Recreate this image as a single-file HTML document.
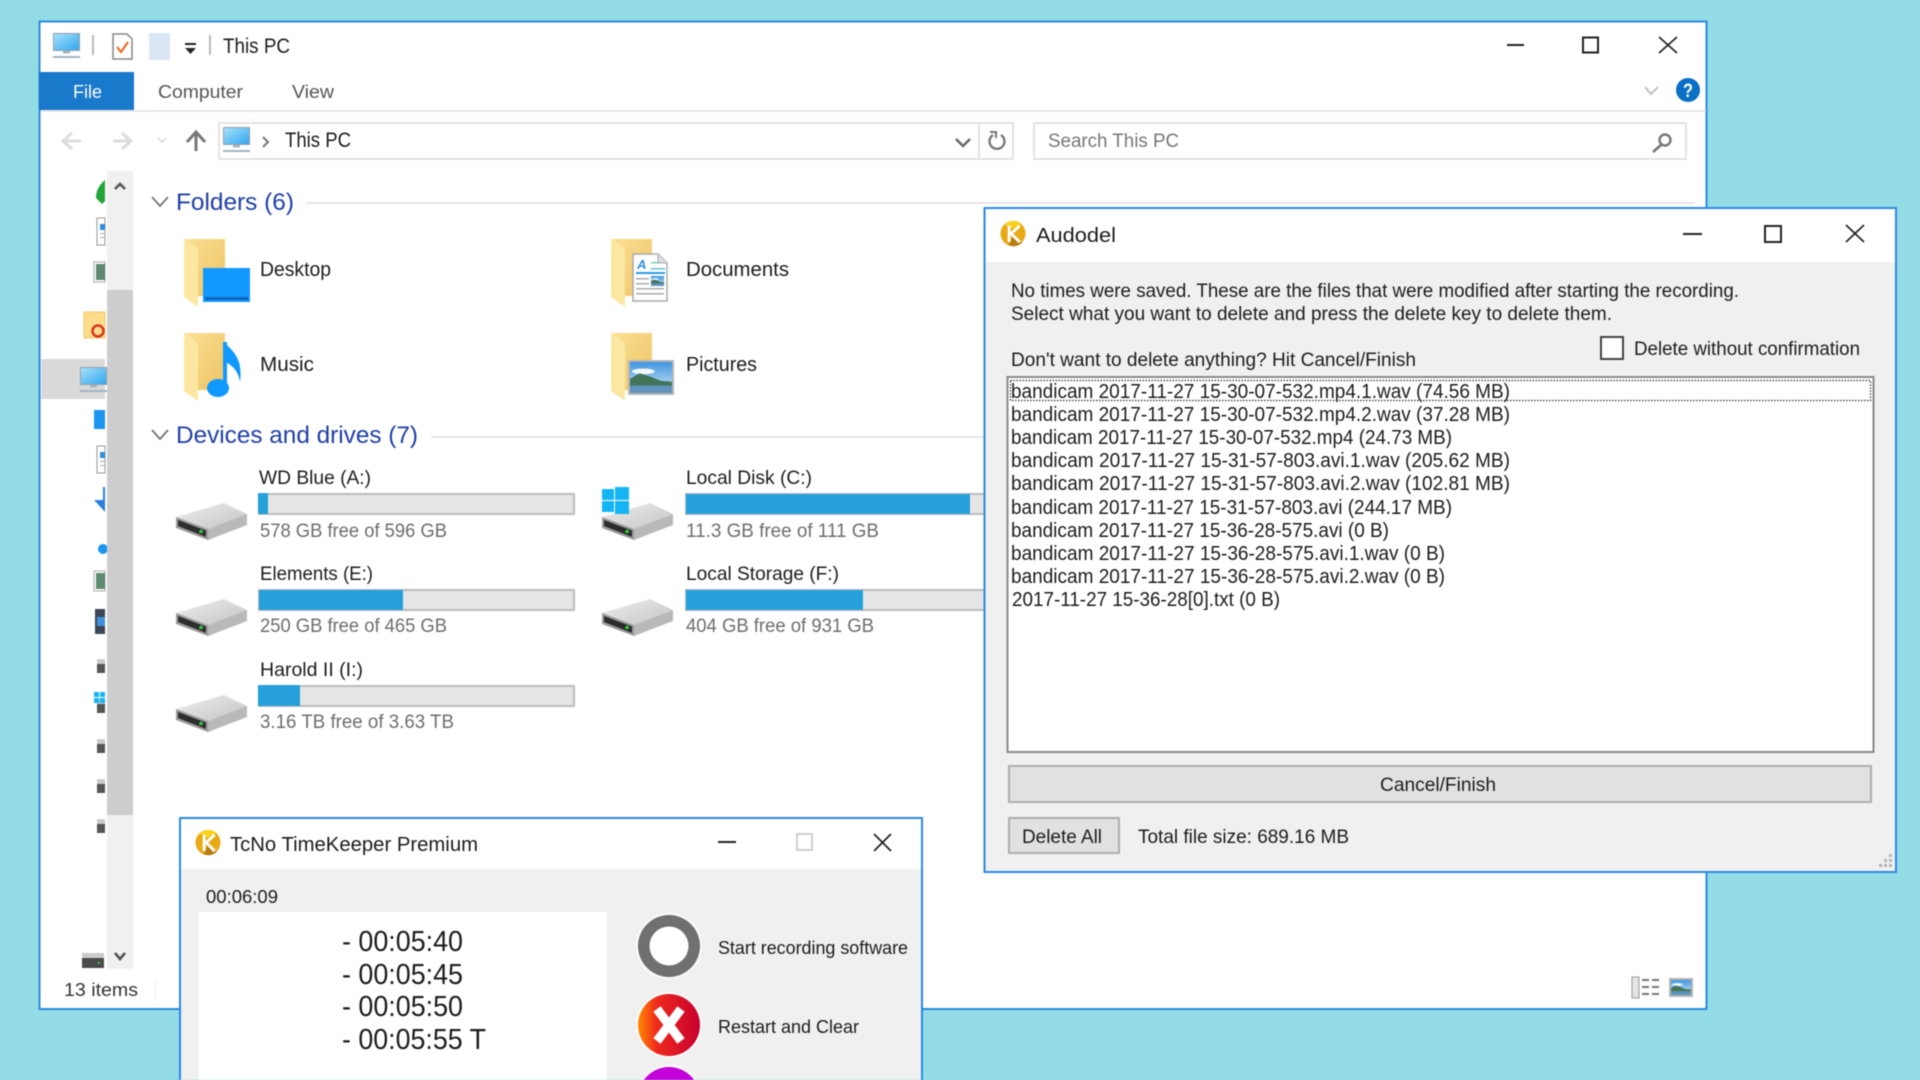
<!DOCTYPE html>
<html><head><meta charset="utf-8"><title>This PC</title>
<style>
html,body{margin:0;padding:0;width:1920px;height:1080px;overflow:hidden;background:#93dce6}
svg{display:block;filter:blur(.45px)}
text{font-family:"Liberation Sans",sans-serif;fill:#1c1c1c}
</style></head><body>
<svg xmlns="http://www.w3.org/2000/svg" width="1920" height="1080" viewBox="0 0 1920 1080" font-size="20">
<defs>
<linearGradient id="scr" x1="0" y1="0" x2="1" y2="1"><stop offset="0" stop-color="#a9e2fb"/><stop offset="1" stop-color="#2ea6ee"/></linearGradient>
<linearGradient id="fb" x1="0" y1="0" x2="1" y2="1"><stop offset="0" stop-color="#fbe093"/><stop offset="1" stop-color="#edc466"/></linearGradient>
<linearGradient id="dt" x1="0" y1="0" x2="1" y2="1"><stop offset="0" stop-color="#eeeeee"/><stop offset="1" stop-color="#c4c4c4"/></linearGradient>
<linearGradient id="red" x1="0" y1="0" x2="1" y2="0"><stop offset="0" stop-color="#ff8a00"/><stop offset=".3" stop-color="#ee2a1c"/><stop offset="1" stop-color="#c80030"/></linearGradient>
<linearGradient id="skyg" x1="0" y1="0" x2="0" y2="1"><stop offset="0" stop-color="#3f96e2"/><stop offset="1" stop-color="#d8ebf2"/></linearGradient>
<symbol id="pic" viewBox="0 0 44 33" preserveAspectRatio="none">
<rect width="44" height="33" fill="url(#skyg)"/>
<ellipse cx="14" cy="10" rx="12" ry="3" fill="#f2f8fb"/>
<polygon points="0,18 10,12 20,15 32,20 44,21 44,25 0,25" fill="#42745a"/>
<rect y="25" width="44" height="8" fill="#5f93bc"/>
</symbol>
<symbol id="mon" viewBox="0 0 27 25" overflow="visible">
<rect x=".5" y=".5" width="26" height="17" fill="url(#scr)" stroke="#8fa0ad"/>
<rect x="10" y="18" width="7" height="2.5" fill="#a9b4bd"/>
<rect x="0" y="23" width="27" height="2" fill="#9fb4c4"/>
</symbol>
<symbol id="fold" viewBox="0 0 42 68" overflow="visible">
<polygon points="0,0 41,0 41,57 14,57 14,10" fill="url(#fb)"/>
<polygon points="0,0 14,10 14,68 0,58" fill="#fce7a2"/>
</symbol>
<symbol id="drv" viewBox="0 0 71 37" overflow="visible">
<polygon points="0,14 48,0 71,11 32,26" fill="url(#dt)"/>
<polygon points="32,26 71,11 71,22 32,37" fill="#b9b9b9"/>
<polygon points="0,14 32,26 32,37 0,25" fill="#9a9a9a"/>
<polygon points="2,17 30,27.500 30,34 2,23" fill="#2d2d2d"/>
<circle cx="25" cy="28.500" r="1.800" fill="#2fd43c"/>
</symbol>
<symbol id="logo" viewBox="0 0 26 28" overflow="visible">
<circle cx="13" cy="14" r="13" fill="#e7a914"/>
<path d="M4 5 A13 13 0 0 1 22 4 L13 9Z" fill="#f9d21c"/>
<path d="M8 26 A13 13 0 0 0 22 24 L14 15Z" fill="#b87d10"/>
<path d="M9 6V23M10 15L20 6M11 14L20 23" stroke="#fff" stroke-width="3" fill="none"/>
</symbol>
</defs>

<!-- EXPLORER -->
<rect x="39.500" y="21.500" width="1667" height="987.500" fill="#fff" stroke="#2b8ae0" stroke-width="2"/>
<use href="#mon" x="53" y="33" width="27" height="25"/>
<rect x="92" y="35" width="2" height="20" fill="#bbb"/>
<path d="M113 34H127L132 39V59H113Z" fill="#fff" stroke="#888" stroke-width="1.5"/>
<path d="M117 47L121 52L128 42" fill="none" stroke="#ef6c2a" stroke-width="2.2"/>
<rect x="149" y="33" width="21" height="27" fill="#dbe6f5"/>
<rect x="185" y="43" width="11" height="2" fill="#222"/>
<polygon points="185,48 196,48 190.500,54" fill="#222"/>
<rect x="209" y="35" width="2" height="20" fill="#bbb"/>
<text x="223" y="53" font-size="21" textLength="67" lengthAdjust="spacingAndGlyphs">This PC</text>
<path d="M1507 45H1524" stroke="#222" stroke-width="2"/>
<rect x="1583" y="37.500" width="15" height="15" fill="none" stroke="#222" stroke-width="2"/>
<path d="M1659 37L1677 53M1677 37L1659 53" stroke="#222" stroke-width="1.700"/>
<rect x="39" y="72" width="95" height="38" fill="#1979ca"/>
<text x="73" y="98" font-size="18" textLength="29" lengthAdjust="spacingAndGlyphs" style="fill:#fff">File</text>
<text x="158" y="98" font-size="18" textLength="85" lengthAdjust="spacingAndGlyphs" style="fill:#555">Computer</text>
<text x="292" y="98" font-size="18" textLength="42" lengthAdjust="spacingAndGlyphs" style="fill:#555">View</text>
<path d="M1645 87L1651 94L1658 87" fill="none" stroke="#bbb" stroke-width="1.800"/>
<ellipse cx="1688" cy="90" rx="12" ry="12" fill="#0b6fc5"/>
<text x="1683" y="97" font-size="19" font-weight="bold" textLength="10" lengthAdjust="spacingAndGlyphs" style="fill:#fff">?</text>
<rect x="41" y="110" width="1665" height="2" fill="#e6e6e6"/>
<!-- nav -->
<path d="M81 141H64M72 133L63 141L72 149" fill="none" stroke="#dcdcdc" stroke-width="3"/>
<path d="M113 141H130M122 133L131 141L122 149" fill="none" stroke="#dcdcdc" stroke-width="3"/>
<path d="M158 138L162 142L166 138" fill="none" stroke="#ddd" stroke-width="1.800"/>
<path d="M196 151V133M187 142L196 132L205 142" fill="none" stroke="#777" stroke-width="3"/>
<rect x="219" y="123" width="794" height="36" fill="#fff" stroke="#e3e3e3" stroke-width="2"/>
<path d="M979 123V159" stroke="#e3e3e3" stroke-width="2"/>
<use href="#mon" x="223" y="127" width="27" height="25"/>
<path d="M263 137L268 142L263 147" fill="none" stroke="#777" stroke-width="2"/>
<text x="285" y="147" font-size="21" textLength="66" lengthAdjust="spacingAndGlyphs">This PC</text>
<path d="M956 139L963 146L970 139" fill="none" stroke="#666" stroke-width="2.400"/>
<path d="M1001 135A7.500 7.500 0 1 1 993 135" fill="none" stroke="#777" stroke-width="2.400"/>
<path d="M990 132H996V138" fill="none" stroke="#777" stroke-width="2"/>
<rect x="1034" y="123" width="652" height="36" fill="#fff" stroke="#e3e3e3" stroke-width="2"/>
<text x="1048" y="147" font-size="19" textLength="131" lengthAdjust="spacingAndGlyphs" style="fill:#777">Search This PC</text>
<circle cx="1665" cy="140" r="5.500" fill="none" stroke="#777" stroke-width="2.400"/>
<path d="M1661 145L1653 152" stroke="#777" stroke-width="2.800"/>
<!-- sidebar -->
<rect x="41" y="359" width="64" height="40" fill="#d9d9d9"/>
<path d="M105 180C98 186 96 192 96 198L102 204L105 201Z" fill="#22a53a"/>
<rect x="97" y="218" width="8" height="27" fill="#fff" stroke="#999"/>
<rect x="100" y="224" width="5" height="6" fill="#2f8fdc"/>
<rect x="100" y="233" width="5" height="1" fill="#aaa"/><rect x="100" y="237" width="5" height="1" fill="#aaa"/>
<rect x="94" y="262" width="11" height="20" fill="#fff" stroke="#aaa"/>
<rect x="96" y="264" width="9" height="16" fill="#5e8a6e"/>
<rect x="84" y="312" width="21" height="26" fill="#fbdc8a" stroke="#eec96a"/>
<circle cx="98" cy="331" r="5.500" fill="none" stroke="#d8331f" stroke-width="2.500"/>
<use href="#mon" x="80" y="367" width="27" height="25"/>
<rect x="41" y="359" width="0" height="0"/>
<rect x="94" y="410" width="11" height="19" fill="#1b95f0"/>
<rect x="97" y="446" width="8" height="27" fill="#fff" stroke="#999"/>
<rect x="100" y="452" width="5" height="6" fill="#2f8fdc"/>
<rect x="100" y="461" width="5" height="1" fill="#aaa"/><rect x="100" y="465" width="5" height="1" fill="#aaa"/>
<path d="M105 487V512L94 500H103V487Z" fill="#2a82dc"/>
<circle cx="103" cy="549" r="5" fill="#1b95f0"/>
<rect x="94" y="571" width="11" height="20" fill="#fff" stroke="#aaa"/>
<rect x="96" y="573" width="9" height="16" fill="#5e8a6e"/>
<rect x="95" y="609" width="10" height="25" fill="#3b4656"/>
<rect x="97" y="617" width="8" height="9" fill="#3f8fdc"/>
<g fill="#555"><rect x="97" y="664" width="8" height="9"/><rect x="97" y="704" width="8" height="9"/><rect x="97" y="744" width="8" height="9"/><rect x="97" y="784" width="8" height="9"/><rect x="97" y="824" width="8" height="9"/></g>
<g fill="#c9c9c9"><rect x="97" y="659" width="8" height="5"/><rect x="97" y="699" width="8" height="5"/><rect x="97" y="739" width="8" height="5"/><rect x="97" y="779" width="8" height="5"/><rect x="97" y="819" width="8" height="5"/></g>
<g fill="#14b4f5"><rect x="94" y="692" width="5" height="5"/><rect x="100" y="692" width="5" height="5"/><rect x="94" y="698" width="5" height="5"/><rect x="100" y="698" width="5" height="5"/></g>
<rect x="82" y="953" width="22" height="5" fill="#ccc"/><rect x="82" y="958" width="22" height="10" fill="#4a4a4a"/><rect x="98" y="962" width="2" height="2" fill="#3c3"/>
<rect x="107" y="171" width="26" height="798" fill="#f0f0f0"/>
<rect x="107" y="290" width="26" height="525" fill="#cdcdcd"/>
<path d="M115 189L120 184L125 189" fill="none" stroke="#555" stroke-width="2.600"/>
<path d="M115 953L120 959L125 953" fill="none" stroke="#555" stroke-width="2.600"/>
<text x="64" y="996" font-size="18" textLength="74" lengthAdjust="spacingAndGlyphs" style="fill:#333">13 items</text>
<rect x="155" y="980" width="1" height="20" fill="#eee"/>
<!-- folders -->
<path d="M152 197L160 206L168 197" fill="none" stroke="#777" stroke-width="1.800"/>
<text x="176" y="210" font-size="24" textLength="118" lengthAdjust="spacingAndGlyphs" style="fill:#1f3fa6">Folders (6)</text>
<rect x="306" y="202" width="1389" height="2" fill="#e6e6e6"/>
<use href="#fold" x="184" y="239" width="42" height="68"/>
<rect x="203" y="268" width="47" height="34" fill="#1199ff"/>
<rect x="205" y="297" width="43" height="3" fill="#0d65c0"/>
<text x="260" y="276" font-size="20" textLength="71" lengthAdjust="spacingAndGlyphs">Desktop</text>
<use href="#fold" x="184" y="333" width="42" height="68"/>
<path d="M225 342L225 385" stroke="#1199ff" stroke-width="4"/>
<ellipse cx="218" cy="388" rx="11" ry="9" fill="#1199ff"/>
<path d="M226 344C234 352 243 360 240 382C238 370 232 366 226 362Z" fill="#1199ff"/>
<text x="260" y="371" font-size="20" textLength="54" lengthAdjust="spacingAndGlyphs">Music</text>
<use href="#fold" x="611" y="239" width="42" height="68"/>
<path d="M633 254H658L667 263V301H633Z" fill="#fff" stroke="#aaa" stroke-width="1.500"/>
<path d="M658 254V263H667" fill="#ddd" stroke="#aaa"/>
<text x="637" y="269" font-size="13" font-style="italic" font-weight="bold" style="fill:#2a8fe0">A</text>
<rect x="636" y="272" width="29" height="2" fill="#2b9be6"/>
<rect x="651" y="262" width="8" height="1.500" fill="#7cc"/><rect x="651" y="268" width="14" height="1.500" fill="#6bd"/>
<use href="#pic" x="651" y="276" width="13" height="10"/>
<g fill="#aaa"><rect x="636" y="278" width="13" height="1.500"/><rect x="636" y="283" width="13" height="1.500"/><rect x="636" y="288" width="28" height="1.500"/><rect x="636" y="293" width="28" height="1.500"/></g>
<text x="686" y="276" font-size="20" textLength="103" lengthAdjust="spacingAndGlyphs">Documents</text>
<use href="#fold" x="611" y="333" width="42" height="68"/>
<rect x="628" y="360" width="46" height="35" fill="#b5b5b5"/>
<use href="#pic" x="630" y="362" width="42" height="31"/>
<text x="686" y="371" font-size="20" textLength="71" lengthAdjust="spacingAndGlyphs">Pictures</text>
<path d="M152 430L160 439L168 430" fill="none" stroke="#777" stroke-width="1.800"/>
<text x="176" y="443" font-size="24" textLength="242" lengthAdjust="spacingAndGlyphs" style="fill:#1f3fa6">Devices and drives (7)</text>
<rect x="431" y="436" width="560" height="2" fill="#e6e6e6"/>
<!-- drives -->
<use href="#drv" x="176" y="503" width="71" height="37"/>
<use href="#drv" x="176" y="599" width="71" height="37"/>
<use href="#drv" x="176" y="695" width="71" height="37"/>
<use href="#drv" x="602" y="503" width="71" height="37"/>
<use href="#drv" x="602" y="599" width="71" height="37"/>
<g fill="#15b4f5"><rect x="602" y="489" width="12" height="11"/><rect x="615" y="487" width="14" height="13"/><rect x="602" y="501" width="12" height="11"/><rect x="615" y="501" width="14" height="13"/></g>
<g fill="#e6e6e6" stroke="#bcbcbc" stroke-width="2">
<rect x="259" y="494" width="315" height="20"/><rect x="259" y="590" width="315" height="20"/><rect x="259" y="686" width="315" height="20"/>
<rect x="686" y="494" width="311" height="20"/><rect x="686" y="590" width="311" height="20"/>
</g>
<g fill="#26a0da">
<rect x="258" y="493" width="10" height="21"/><rect x="259" y="590" width="144" height="20"/><rect x="258" y="685" width="42" height="21"/>
<rect x="686" y="494" width="284" height="20"/><rect x="686" y="590" width="177" height="20"/>
</g>
<text x="259" y="484" font-size="19.500" textLength="112" lengthAdjust="spacingAndGlyphs">WD Blue (A:)</text>
<text x="260" y="537" font-size="19.500" textLength="187" lengthAdjust="spacingAndGlyphs" style="fill:#6d6d6d">578 GB free of 596 GB</text>
<text x="260" y="580" font-size="19.500" textLength="113" lengthAdjust="spacingAndGlyphs">Elements (E:)</text>
<text x="260" y="632" font-size="19.500" textLength="187" lengthAdjust="spacingAndGlyphs" style="fill:#6d6d6d">250 GB free of 465 GB</text>
<text x="260" y="676" font-size="19.500" textLength="103" lengthAdjust="spacingAndGlyphs">Harold II (I:)</text>
<text x="260" y="728" font-size="19.500" textLength="194" lengthAdjust="spacingAndGlyphs" style="fill:#6d6d6d">3.16 TB free of 3.63 TB</text>
<text x="686" y="484" font-size="19.500" textLength="126" lengthAdjust="spacingAndGlyphs">Local Disk (C:)</text>
<text x="686" y="537" font-size="19.500" textLength="193" lengthAdjust="spacingAndGlyphs" style="fill:#6d6d6d">11.3 GB free of 111 GB</text>
<text x="686" y="580" font-size="19.500" textLength="153" lengthAdjust="spacingAndGlyphs">Local Storage (F:)</text>
<text x="686" y="632" font-size="19.500" textLength="188" lengthAdjust="spacingAndGlyphs" style="fill:#6d6d6d">404 GB free of 931 GB</text>
<!-- view icons -->
<rect x="1632" y="977" width="7" height="21" fill="#e4e4e4" stroke="#999"/>
<g fill="#777"><rect x="1642" y="979" width="7" height="2"/><rect x="1652" y="979" width="7" height="2"/><rect x="1642" y="986" width="7" height="2"/><rect x="1652" y="986" width="7" height="2"/><rect x="1642" y="993" width="7" height="2"/><rect x="1652" y="993" width="7" height="2"/></g>
<rect x="1669" y="978" width="24" height="19" fill="#b5b5b5"/>
<use href="#pic" x="1671" y="980" width="20" height="15"/>

<!-- TIMEKEEPER -->
<rect x="180" y="818" width="742" height="270" fill="#f0f0f0" stroke="#2b8ae0" stroke-width="2"/>
<rect x="181" y="819" width="740" height="50" fill="#fff"/>
<use href="#logo" x="195" y="829" width="26" height="27"/>
<text x="230" y="851" font-size="20" textLength="248" lengthAdjust="spacingAndGlyphs">TcNo TimeKeeper Premium</text>
<path d="M718 842H736" stroke="#222" stroke-width="2"/>
<rect x="797" y="834" width="15" height="16" fill="none" stroke="#ccc" stroke-width="1.800"/>
<path d="M874 834L891 851M891 834L874 851" stroke="#222" stroke-width="1.700"/>
<text x="206" y="903" font-size="18.500" textLength="72" lengthAdjust="spacingAndGlyphs">00:06:09</text>
<rect x="199" y="912" width="408" height="170" fill="#fff"/>
<text x="342" y="951" font-size="28.500" textLength="121" lengthAdjust="spacingAndGlyphs">- 00:05:40</text>
<text x="342" y="984" font-size="28.500" textLength="121" lengthAdjust="spacingAndGlyphs">- 00:05:45</text>
<text x="342" y="1016" font-size="28.500" textLength="121" lengthAdjust="spacingAndGlyphs">- 00:05:50</text>
<text x="342" y="1049" font-size="28.500" textLength="144" lengthAdjust="spacingAndGlyphs">- 00:05:55 T</text>
<circle cx="669" cy="946" r="33" fill="#fbfbfb"/>
<circle cx="669" cy="946" r="31" fill="#707070"/>
<circle cx="669" cy="946" r="19.500" fill="#fff"/>
<text x="718" y="954" font-size="18.500" textLength="190" lengthAdjust="spacingAndGlyphs">Start recording software</text>
<circle cx="669" cy="1025" r="33" fill="#fbfbfb"/>
<circle cx="669" cy="1025" r="31" fill="url(#red)"/>
<path d="M657 1009L681 1041M681 1009L657 1041" stroke="#fff" stroke-width="9" fill="none"/>
<text x="718" y="1033" font-size="18.500" textLength="141" lengthAdjust="spacingAndGlyphs">Restart and Clear</text>
<circle cx="669" cy="1098" r="33" fill="#fbfbfb"/>
<circle cx="669" cy="1098" r="31" fill="#c400d8"/>

<!-- AUDODEL -->
<rect x="984.500" y="208" width="911.500" height="664" fill="#f0f0f0" stroke="#2b8ae0" stroke-width="2"/>
<rect x="986" y="209" width="909" height="53" fill="#fff"/>
<use href="#logo" x="1000" y="220" width="26" height="27"/>
<text x="1036" y="242" font-size="20" textLength="80" lengthAdjust="spacingAndGlyphs">Audodel</text>
<path d="M1683 234H1702" stroke="#222" stroke-width="2"/>
<rect x="1765" y="226" width="16" height="16" fill="none" stroke="#222" stroke-width="2"/>
<path d="M1846 225L1864 242M1864 225L1846 242" stroke="#222" stroke-width="1.700"/>
<text x="1011" y="297" font-size="19.500" textLength="728" lengthAdjust="spacingAndGlyphs">No times were saved. These are the files that were modified after starting the recording.</text>
<text x="1011" y="320" font-size="19.500" textLength="601" lengthAdjust="spacingAndGlyphs">Select what you want to delete and press the delete key to delete them.</text>
<text x="1011" y="366" font-size="19.500" textLength="405" lengthAdjust="spacingAndGlyphs">Don't want to delete anything? Hit Cancel/Finish</text>
<rect x="1601" y="337" width="22" height="22" fill="#fff" stroke="#333" stroke-width="1.800"/>
<text x="1634" y="355" font-size="19.500" textLength="226" lengthAdjust="spacingAndGlyphs">Delete without confirmation</text>
<rect x="1007.500" y="377" width="866" height="375" fill="#fff" stroke="#8a8a8a" stroke-width="2"/>
<rect x="1010.500" y="380.500" width="860" height="20" fill="none" stroke="#333" stroke-width="1.200" stroke-dasharray="1.500 1.500"/>
<text x="1011" y="398" font-size="20" textLength="499" lengthAdjust="spacingAndGlyphs">bandicam 2017-11-27 15-30-07-532.mp4.1.wav (74.56 MB)</text>
<text x="1011" y="421" font-size="20" textLength="499" lengthAdjust="spacingAndGlyphs">bandicam 2017-11-27 15-30-07-532.mp4.2.wav (37.28 MB)</text>
<text x="1011" y="444" font-size="20" textLength="441" lengthAdjust="spacingAndGlyphs">bandicam 2017-11-27 15-30-07-532.mp4 (24.73 MB)</text>
<text x="1011" y="467" font-size="20" textLength="499" lengthAdjust="spacingAndGlyphs">bandicam 2017-11-27 15-31-57-803.avi.1.wav (205.62 MB)</text>
<text x="1011" y="490" font-size="20" textLength="499" lengthAdjust="spacingAndGlyphs">bandicam 2017-11-27 15-31-57-803.avi.2.wav (102.81 MB)</text>
<text x="1011" y="514" font-size="20" textLength="441" lengthAdjust="spacingAndGlyphs">bandicam 2017-11-27 15-31-57-803.avi (244.17 MB)</text>
<text x="1011" y="537" font-size="20" textLength="378" lengthAdjust="spacingAndGlyphs">bandicam 2017-11-27 15-36-28-575.avi (0 B)</text>
<text x="1011" y="560" font-size="20" textLength="434" lengthAdjust="spacingAndGlyphs">bandicam 2017-11-27 15-36-28-575.avi.1.wav (0 B)</text>
<text x="1011" y="583" font-size="20" textLength="434" lengthAdjust="spacingAndGlyphs">bandicam 2017-11-27 15-36-28-575.avi.2.wav (0 B)</text>
<text x="1012" y="606" font-size="20" textLength="268" lengthAdjust="spacingAndGlyphs">2017-11-27 15-36-28[0].txt (0 B)</text>
<rect x="1009" y="766" width="862" height="36" fill="#e1e1e1" stroke="#adadad" stroke-width="2"/>
<text x="1380" y="791" font-size="19.500" textLength="116" lengthAdjust="spacingAndGlyphs">Cancel/Finish</text>
<rect x="1009" y="818" width="110" height="35" fill="#e1e1e1" stroke="#adadad" stroke-width="2"/>
<text x="1022" y="843" font-size="19.500" textLength="80" lengthAdjust="spacingAndGlyphs">Delete All</text>
<text x="1138" y="843" font-size="19.500" textLength="211" lengthAdjust="spacingAndGlyphs">Total file size: 689.16 MB</text>
<g fill="#b5b5b5"><rect x="1889" y="854" width="3" height="3"/><rect x="1884" y="859" width="3" height="3"/><rect x="1889" y="859" width="3" height="3"/><rect x="1879" y="864" width="3" height="3"/><rect x="1884" y="864" width="3" height="3"/><rect x="1889" y="864" width="3" height="3"/></g>
</svg>
</body></html>
